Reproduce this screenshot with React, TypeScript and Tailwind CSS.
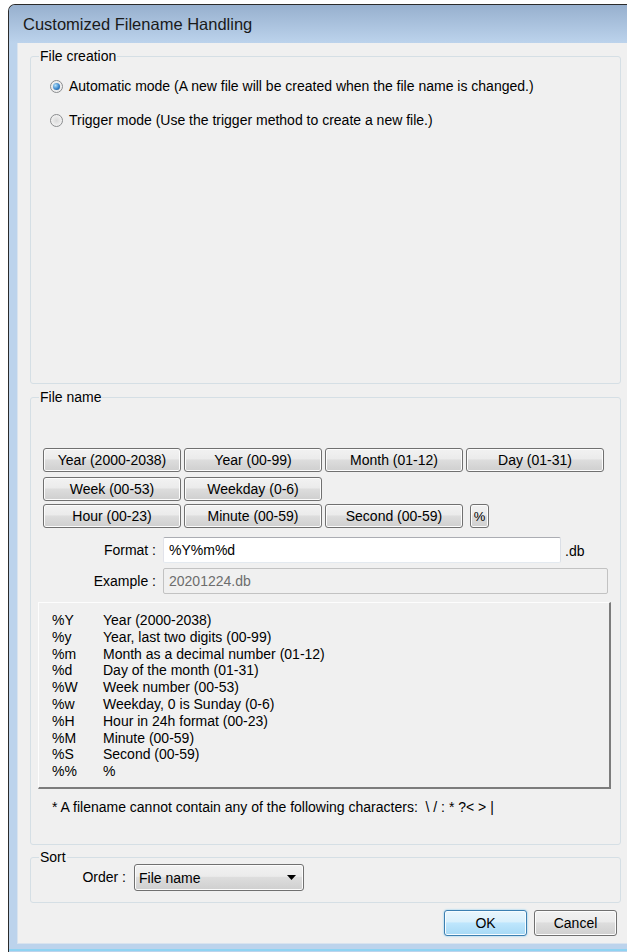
import React from "react";

const FONT = "font-['Liberation_Sans',Arial,sans-serif]";

const tokenButtons: string[][] = [
  ["Year (2000-2038)", "Year (00-99)", "Month (01-12)", "Day (01-31)"],
  ["Week (00-53)", "Weekday (0-6)"],
  ["Hour (00-23)", "Minute (00-59)", "Second (00-59)"],
];

const legendRows: [string, string][] = [
  ["%Y", "Year (2000-2038)"],
  ["%y", "Year, last two digits (00-99)"],
  ["%m", "Month as a decimal number (01-12)"],
  ["%d", "Day of the month (01-31)"],
  ["%W", "Week number (00-53)"],
  ["%w", "Weekday, 0 is Sunday (0-6)"],
  ["%H", "Hour in 24h format (00-23)"],
  ["%M", "Minute (00-59)"],
  ["%S", "Second (00-59)"],
  ["%%", "%"],
];

// classic aero push button
const btn =
  "flex items-center justify-center border border-[#707070] rounded-[3px] bg-[linear-gradient(#f2f2f2_0%,#ebebeb_45%,#dddddd_50%,#cfcfcf_100%)] shadow-[inset_0_0_0_1px_#fcfcfc] leading-none";

const Radio = ({ checked, label }: { checked?: boolean; label: string }) => (
  <label className="flex items-center h-[16px] gap-[6px]">
    <span className="w-[13px] h-[13px] rounded-full border border-[#8a8c8e] bg-[radial-gradient(circle,#d9d9d9_0%,#ececec_55%,#fbfbfb_100%)] flex items-center justify-center shrink-0">
      {checked && (
        <span className="w-[7px] h-[7px] rounded-full bg-[radial-gradient(circle_at_35%_35%,#b4e2fa_0%,#3b86cc_55%,#1b4f86_100%)]" />
      )}
    </span>
    <span>{label}</span>
  </label>
);

const Group = ({
  title,
  className,
  children,
}: {
  title: string;
  className: string;
  children: React.ReactNode;
}) => (
  <fieldset className={`ml-[12px] w-[591px] border border-[#d5dfe5] rounded-[3px] ${className}`}>
    <legend className="ml-[8px] px-[1px] leading-[16px]">{title}</legend>
    {children}
  </fieldset>
);

export default function App() {
  return (
    <div className={`w-[627px] h-[952px] overflow-hidden bg-white text-[14px] text-black ${FONT}`}>
      <div className="ml-[8px] mt-[4px] w-[640px] h-[960px] border-l border-t border-[#2b2b2b] rounded-tl-[7px] bg-[#bcd3ec] flex flex-col">
        {/* caption bar */}
        <div className="h-[38px] shrink-0 rounded-tl-[6px] bg-[linear-gradient(#97b0ce,#bcd3ec)] flex items-center pl-[14px] text-[16.5px] text-[#1a1a1a]">
          Customized Filename Handling
        </div>

        {/* client area */}
        <div className="ml-[8px] w-[622px] h-[901px] shrink-0 bg-[#f0f0f0] border-l border-b border-[#d9e3ee] flex flex-col">
          <Group title="File creation" className="mt-[5px] h-[336px]">
            <div className="pl-[19px] pt-[14px] flex flex-col gap-[18px]">
              <Radio checked label="Automatic mode (A new file will be created when the file name is changed.)" />
              <Radio label="Trigger mode (Use the trigger method to create a new file.)" />
            </div>
          </Group>

          <Group title="File name" className="mt-[5px] h-[456px]">
            <div className="pl-[12px] pt-[43px] flex flex-col">
              <div className="flex gap-[3px]">
                {tokenButtons[0].map((t) => (
                  <button key={t} className={`${btn} w-[138px] h-[24px]`}>
                    {t}
                  </button>
                ))}
              </div>
              <div className="flex gap-[3px] mt-[5px]">
                {tokenButtons[1].map((t) => (
                  <button key={t} className={`${btn} w-[138px] h-[24px]`}>
                    {t}
                  </button>
                ))}
              </div>
              <div className="flex gap-[3px] mt-[3px]">
                {tokenButtons[2].map((t) => (
                  <button key={t} className={`${btn} w-[138px] h-[24px]`}>
                    {t}
                  </button>
                ))}
                <button className={`${btn} ml-[4px] w-[19px] h-[24px] text-[13px]`}>%</button>
              </div>

              {/* format */}
              <div className="flex items-center mt-[9px] h-[26px]">
                <span className="w-[113px] text-right">Format :</span>
                <div className="ml-[7px] w-[398px] h-[26px] bg-white border border-[#abadb3] border-l-[#e2e3ea] border-r-[#dbdfe6] border-b-[#e3e9ef] rounded-[2px] flex items-center pl-[5px]">
                  %Y%m%d
                </div>
                <span className="ml-[4px] mt-[2px]">.db</span>
              </div>

              {/* example */}
              <div className="flex items-center mt-[5px] h-[26px]">
                <span className="w-[113px] text-right">Example :</span>
                <div className="ml-[7px] w-[445px] h-[26px] bg-[#f0f0f0] border border-[#c2c2c2] rounded-[2px] flex items-center pl-[5px] text-[#6d6d6d]">
                  20201224.db
                </div>
              </div>

              {/* specifier reference */}
              <div className="-ml-[5px] mt-[8px] w-[573px] h-[187px] border-t border-l border-[#fdfdfd] border-r-2 border-b-2 border-r-[#7c7c7c] border-b-[#7c7c7c] pl-[13px] pt-[9px]">
                {legendRows.map(([k, v]) => (
                  <div key={k} className="flex leading-[16.8px]">
                    <span className="w-[51px]">{k}</span>
                    <span>{v}</span>
                  </div>
                ))}
              </div>

              <div className="ml-[9px] mt-[10px] leading-[16px]">
                * A filename cannot contain any of the following characters:&nbsp;&nbsp;\ / : * ?&lt; &gt; |
              </div>
            </div>
          </Group>

          <Group title="Sort" className="mt-[4px] h-[54px]">
            <div className="flex items-center -mt-[1px]">
              <span className="w-[95px] text-right">Order :</span>
              <div className={`${btn} ml-[8px] w-[170px] h-[27px] !justify-between px-[4px]`}>
                <span>File name</span>
                <svg width="9" height="5" viewBox="0 0 9 5" className="mr-[3px]">
                  <polygon points="0,0 9,0 4.5,5" fill="#000" />
                </svg>
              </div>
            </div>
          </Group>

          <div className="ml-[426px] mt-[7px] flex gap-[7px]">
            <button className="w-[83px] h-[26px] flex items-center justify-center border border-[#3c7fb1] rounded-[3px] bg-[linear-gradient(#eaf6fd_0%,#d9f0fc_45%,#bee6fd_50%,#a7d9f5_100%)] shadow-[inset_0_0_0_1px_#f6fcff,0_0_2px_#6cc3f0]">
              OK
            </button>
            <button className={`${btn} w-[83px] h-[26px]`}>Cancel</button>
          </div>
        </div>

        {/* bottom frame edge */}
        <div className="mt-[5px] h-[2px] bg-[#8fd3f2]" />
      </div>
    </div>
  );
}
